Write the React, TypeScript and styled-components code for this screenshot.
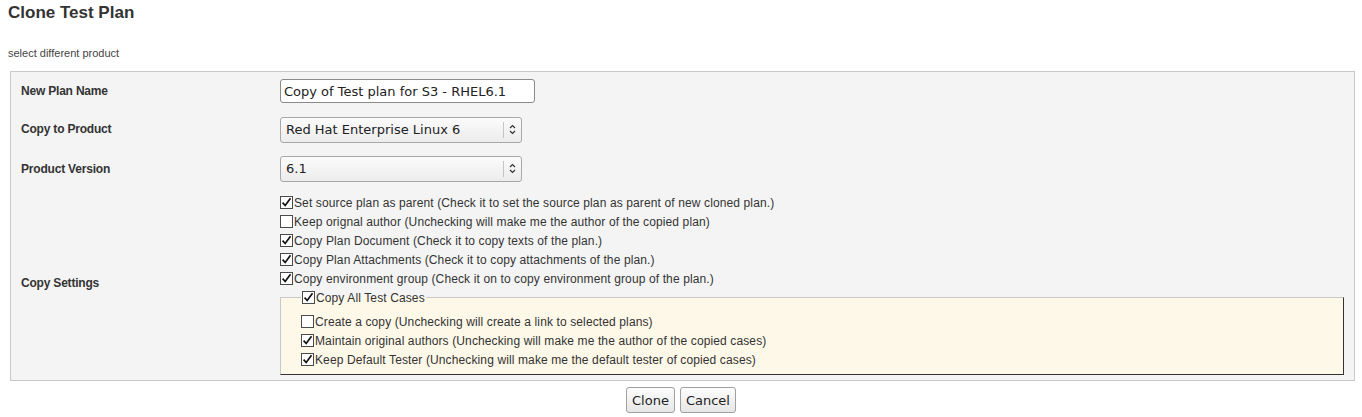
import React from "react";
import styled, { createGlobalStyle } from "styled-components";

const Global = createGlobalStyle`
  html, body { margin: 0; padding: 0; background: #fff; }
  body { font-family: "Liberation Sans", Arial, sans-serif; color: #333; }
`;

const Page = styled.div`
  padding: 3px 8px 0 8px;
`;

const Title = styled.h2`
  margin: 0;
  font-size: 17px;
  line-height: 20px;
  font-weight: bold;
  color: #333;
`;

const Sub = styled.div`
  margin-top: 23px;
  font-size: 11px;
  line-height: 14px;
  color: #444;
`;

const Panel = styled.div`
  margin: 11px -1px 0 2px;
  border: 1px solid #c8c8c8;
  background: #f4f4f4;
  padding: 0 10px 0 0;
`;

const Row = styled.div<{ $h?: number; $pt?: number; $pb?: number }>`
  display: grid;
  grid-template-columns: 269px 1fr;
  align-items: center;
  min-height: ${(p) => (p.$h ? `${p.$h}px` : "auto")};
  padding-top: ${(p) => p.$pt ?? 0}px;
  padding-bottom: ${(p) => p.$pb ?? 0}px;
`;

const Label = styled.div<{ $shift?: number }>`
  padding-left: 10px;
  font-size: 12px;
  font-weight: bold;
  color: #333;
  letter-spacing: -0.2px;
  margin-top: ${(p) => p.$shift ?? 0}px;
`;

const TextInput = styled.input`
  box-sizing: border-box;
  width: 255px;
  height: 24px;
  border: 1px solid #8a8a8a;
  border-radius: 3px;
  padding: 0 3px;
  font-family: "DejaVu Sans", sans-serif;
  font-size: 13px;
  color: #222;
  background: #fff;
  outline: none;
`;

const SelectBox = styled.div`
  box-sizing: border-box;
  width: 242px;
  height: 26px;
  border: 1px solid #a8a8a8;
  border-radius: 3px;
  background: linear-gradient(#fbfbfb, #ececec);
  display: flex;
  align-items: center;
  font-family: "DejaVu Sans", sans-serif;
  font-size: 13px;
  color: #222;
`;

const SelectText = styled.span`
  flex: 1;
  padding-left: 5px;
`;

const SelectSep = styled.span`
  width: 1px;
  align-self: stretch;
  margin: 4px 0;
  background: #c4c4c4;
`;

const SelectArrow = styled.span`
  width: 17px;
  display: flex;
  align-items: center;
  justify-content: center;
`;

const Options = styled.div`
  display: flex;
  flex-direction: column;
`;

const Opt = styled.label`
  display: flex;
  align-items: center;
  height: 19px;
  font-size: 12px;
  letter-spacing: 0.12px;
  color: #333;
  white-space: nowrap;
`;

const Box = styled.span`
  box-sizing: border-box;
  width: 13px;
  height: 13px;
  margin-right: 1px;
  border: 1px solid #4a4a4a;
  background: #fff;
  display: inline-flex;
  align-items: center;
  justify-content: center;
  flex: none;
`;

const Fieldset = styled.fieldset`
  margin: 0 0 5px 0;
  padding: 5px 0 5px 20px;
  border: 1px solid;
  border-color: #c8c8c8 #333 #333 #c8c8c8;
  background: #fef8e8;
  min-width: 0;
`;

const Legend = styled.legend`
  padding: 0 1px;
  background: transparent;
`;

const Buttons = styled.div`
  display: flex;
  justify-content: center;
  gap: 5px;
  margin-top: 6px;
`;

const Button = styled.button`
  height: 26px;
  padding: 0 5px;
  border: 1px solid #a0a0a0;
  border-radius: 3px;
  background: linear-gradient(#fdfdfd, #e6e6e6);
  font-family: "DejaVu Sans", sans-serif;
  font-size: 13px;
  color: #222;
`;

function Check({ on }: { on: boolean }) {
  return (
    <Box>
      {on && (
        <svg width="11" height="11" viewBox="0 0 11 11">
          <path d="M1.6 5.6 L4.2 8.5 L9.5 1.3" fill="none" stroke="#111" strokeWidth="1.7" />
        </svg>
      )}
    </Box>
  );
}

function Option({ on, children }: { on: boolean; children: React.ReactNode }) {
  return (
    <Opt>
      <Check on={on} />
      {children}
    </Opt>
  );
}

function Select({ value }: { value: string }) {
  return (
    <SelectBox>
      <SelectText>{value}</SelectText>
      <SelectSep />
      <SelectArrow>
        <svg width="7" height="11" viewBox="0 0 7 11">
          <path d="M1 4 L3.5 1.5 L6 4 M1 7 L3.5 9.5 L6 7" fill="none" stroke="#333" strokeWidth="1.2" />
        </svg>
      </SelectArrow>
    </SelectBox>
  );
}

export default function App() {
  return (
    <>
      <Global />
      <Page>
        <Title>Clone Test Plan</Title>
        <Sub>select different product</Sub>
        <Panel>
          <Row $h={38}>
            <Label>New Plan Name</Label>
            <div>
              <TextInput defaultValue="Copy of Test plan for S3 - RHEL6.1" />
            </div>
          </Row>
          <Row $h={39}>
            <Label $shift={-1}>Copy to Product</Label>
            <div>
              <Select value="Red Hat Enterprise Linux 6" />
            </div>
          </Row>
          <Row $h={39}>
            <Label>Product Version</Label>
            <div>
              <Select value="6.1" />
            </div>
          </Row>
          <Row $pt={5}>
            <Label $shift={-7}>Copy Settings</Label>
            <Options>
              <Option on>Set source plan as parent (Check it to set the source plan as parent of new cloned plan.)</Option>
              <Option on={false}>Keep orignal author (Unchecking will make me the author of the copied plan)</Option>
              <Option on>Copy Plan Document (Check it to copy texts of the plan.)</Option>
              <Option on>Copy Plan Attachments (Check it to copy attachments of the plan.)</Option>
              <Option on>Copy environment group (Check it on to copy environment group of the plan.)</Option>
              <Fieldset>
                <Legend>
                  <Option on>Copy All Test Cases</Option>
                </Legend>
                <Option on={false}>Create a copy (Unchecking will create a link to selected plans)</Option>
                <Option on>Maintain original authors (Unchecking will make me the author of the copied cases)</Option>
                <Option on>Keep Default Tester (Unchecking will make me the default tester of copied cases)</Option>
              </Fieldset>
            </Options>
          </Row>
        </Panel>
        <Buttons>
          <Button>Clone</Button>
          <Button>Cancel</Button>
        </Buttons>
      </Page>
    </>
  );
}
